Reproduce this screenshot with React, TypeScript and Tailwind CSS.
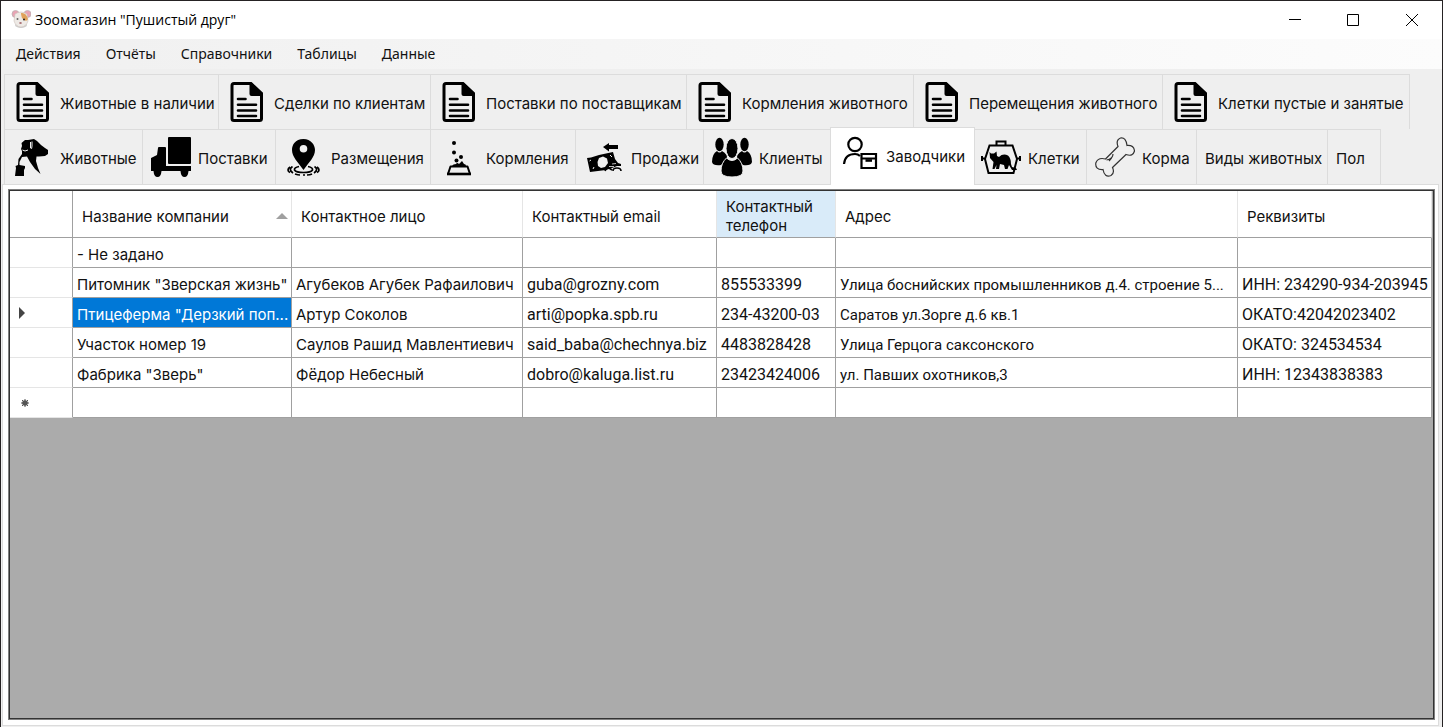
import React from "react";

function FileIcon() {
  return (
    <svg viewBox="0 0 40 40" className="size-10">
      <path d="M7 1.500H24L34.500 11.500V36.500Q34.500 38.500 32.500 38.500H7Q5 38.500 5 36.500V3.500Q5 1.500 7 1.500Z" fill="none" stroke="#000" strokeWidth="3" />
      <path d="M22.500 1H25L36 11.500V14H24.500Q22.500 14 22.500 12Z" />
      <path d="M11 17H18.500M11 22.800H29M11 28.500H29M11 34H29" stroke="#000" strokeWidth="2.600" strokeLinecap="round" />
    </svg>
  );
}

function PetsIcon() {
  return (
    <svg viewBox="0 0 40 40" className="size-10">
      <path d="M2 39L3 31L2.500 29L5 28L5.500 22L9 17L9 14L8 12L9 9L8.500 6L12 3L15 3L21 2L24 4L28 8L32 11L35 13V17L32 19L26 19.500L23.500 19.500L23 24L25 31L27.500 37L22 32L17 25L14 19.500L9 20L6.500 25V28L12 29V31L11 33V39Z" />
      <path d="M17.500 5V11Q19 13 19 9V4.500M9.500 13L12 14L15 13" fill="none" stroke="#efefef" strokeWidth="1" />
    </svg>
  );
}

function TruckIcon() {
  return (
    <svg viewBox="0 0 40 40" className="size-10">
      <rect x="17" y="0" width="23" height="27" rx="1" />
      <path d="M7 11Q7 10 8 10H14Q15 10 15 11V29H40V34H37.500Q37 40 33.500 40Q30 40 29.500 34H10.500Q10 40 6.500 40Q3 40 2.500 34H0V21L6 18Z" />
    </svg>
  );
}

function PinIcon() {
  return (
    <svg viewBox="0 0 40 40" className="size-10">
      <path fillRule="evenodd" d="M19.500 2C11 2 8 8 8 13C8 20 14 25 19.500 33C25 25 31 20 31 13C31 8 27 2 19.500 2ZM19.500 8A3.800 3.800 0 1 1 19.500 15.600A3.800 3.800 0 1 1 19.500 8Z" />
      <path d="M15 29.500Q10 30.500 10.500 33Q12 35.500 19.500 35.500Q27 35.500 28.500 33Q29 30.500 24 29.500M8.500 29.500Q4 32.500 9 36M30.500 29.500Q35 32.500 30 36M6 30Q2 33 6 35.500M33 30Q37 33 33 35.500M11 37Q14 38 16 38M19 38H21M23 38Q26 38 28 37" fill="none" stroke="#000" strokeWidth="1.700" />
    </svg>
  );
}

function FeedIcon() {
  return (
    <svg viewBox="0 0 40 40" className="size-10">
      <circle cx="15" cy="6" r="2" />
      <circle cx="15" cy="15.500" r="2" />
      <circle cx="22" cy="20" r="2" />
      <circle cx="17.500" cy="23.500" r="2" />
      <path d="M13 29Q14 27 17 27Q18 25 20 27L23 24L25 27Q27 27 27 29Z" />
      <path d="M11.500 29.500H28.500L31 37H9Z" fill="none" stroke="#000" strokeWidth="2" strokeLinejoin="round" />
      <path d="M8 37H32" stroke="#000" strokeWidth="2.600" />
    </svg>
  );
}

function SaleIcon() {
  return (
    <svg viewBox="0 0 40 40" className="size-10">
      <path d="M19 10L25 6V8H34V12H25V14.500Z" />
      <path d="M3 21L7 20.500L15 18L29 15L31 22L34 26L37 27V29H33L28 31L22 33L6 35Z" />
      <path d="M13.500 25L15 21L19 19.500L23 21.500L24 26L21 30L17 31L14 29Z" fill="#efefef" />
      <path d="M5.500 24L7 23M9 32L10 30M26 18L28 20" stroke="#efefef" strokeWidth="1" />
      <path d="M21 34Q23 30 25 31L28 33M29 34Q29 31 33 31Q37 31 37 34" fill="none" stroke="#000" strokeWidth="1.600" />
      <path d="M28 27L32 26.500M25 29.500H30" stroke="#efefef" strokeWidth=".8" />
    </svg>
  );
}

function ClientsIcon() {
  return (
    <svg viewBox="0 0 40 40" className="size-10">
      <ellipse cx="7.500" cy="7.500" rx="4.200" ry="6.800" />
      <ellipse cx="32.500" cy="7.500" rx="4.200" ry="6.800" />
      <path d="M0 25Q0 17 5 14Q7.500 17 10 14Q16 17 15 23L9 28Q1 29 0 25ZM40 25Q40 17 35 14Q32.500 17 30 14Q24 17 25 23L31 28Q39 29 40 25Z" />
      <g stroke="#efefef" strokeWidth="1">
        <path d="M14.500 21Q20 26 25.500 21Q31 26 31 34Q31 40 20 40Q9 40 9 34Q9 26 14.500 21Z" />
        <ellipse cx="20" cy="11.500" rx="6" ry="10" />
      </g>
    </svg>
  );
}

function BreederIcon() {
  return (
    <svg viewBox="0 0 40 40" className="size-10">
      <g fill="none" stroke="#000" strokeWidth="2.200">
        <circle cx="16" cy="9.500" r="6.700" />
        <path d="M5 29Q6 19 16 19Q19 19 21 21" />
        <path d="M22.500 19H37V33H22.500ZM22.500 23.500H37" />
        <path d="M26.500 25.500H33" strokeWidth="2.600" />
      </g>
    </svg>
  );
}

function CageIcon() {
  return (
    <svg viewBox="0 0 40 40" className="size-10">
      <path d="M8.500 8.500H31.500L36 22L32.500 36H7.500L4 22ZM15.500 8V4.500H24.500V8M1 19V24M39 19V24M0 21.500H4M36 21.500H40" fill="none" stroke="#000" strokeWidth="2" />
      <path d="M8.500 15L10 16.500L13 16.500L15.500 14.500L16 19L18 20Q22 16 27 18.500Q30 21 30 27L31 30L35 31L36 33H31L28 28L26.500 32H24L23 28L19 27L18 32H15L15.500 28L13.500 32H11.500L12.500 25L9 21Z" />
    </svg>
  );
}

function BoneIcon() {
  return (
    <svg viewBox="0 0 40 40" className="size-10">
      <path d="M10.500 22L23 9.500Q20.500 3 25.500 1Q31 0 32 8.500Q39 8 39.500 14Q38 20 31 17.500L17.500 30.500Q20 36 16 38.500Q9.500 41 8 32.500Q0 33 .800 26Q3 20 10.500 22ZM11.500 23Q18 22 18 17M14 24L16.500 21" fill="none" stroke="#333" strokeWidth="1.200" />
    </svg>
  );
}

function HamsterIcon() {
  return (
    <svg viewBox="0 0 20 20" className="size-5">
      <ellipse cx="10" cy="15" rx="6" ry="3" fill="#cfcfcf" />
      <circle cx="4.500" cy="4" r="3.500" fill="#e9a3b4" stroke="#bdb3b3" strokeWidth=".8" />
      <circle cx="16.500" cy="4" r="3.500" fill="#e9a3b4" stroke="#bdb3b3" strokeWidth=".8" />
      <path d="M4 4Q10 0 16 4L17 11Q15 17 10 17Q5 17 3 11Z" fill="#eeeae6" stroke="#cbbfb8" strokeWidth=".6" />
      <path d="M10 3Q15 2 17 9Q16 12 13 10Q10 8 10 3Z" fill="#e0a25a" />
      <circle cx="6.500" cy="9" r="1" fill="#666" />
      <circle cx="13" cy="9.500" r="1" fill="#222" />
      <ellipse cx="9.500" cy="13" rx="1.300" ry="1" fill="#a97074" />
    </svg>
  );
}

const reports = [
  { label: "Животные в наличии", width: "w-[214px]" },
  { label: "Сделки по клиентам", width: "w-[212px]" },
  { label: "Поставки по поставщикам", width: "w-[256px]" },
  { label: "Кормления животного", width: "w-[227px]" },
  { label: "Перемещения животного", width: "w-[249px]" },
  { label: "Клетки пустые и занятые", width: "w-[247px]" },
];

type Tab = { label: string; width: string; Icon?: () => React.JSX.Element; active?: boolean };

const tabs: Tab[] = [
  { label: "Животные", width: "w-[138px]", Icon: PetsIcon },
  { label: "Поставки", width: "w-[133px]", Icon: TruckIcon },
  { label: "Размещения", width: "w-[155px]", Icon: PinIcon },
  { label: "Кормления", width: "w-[145px]", Icon: FeedIcon },
  { label: "Продажи", width: "w-[128px]", Icon: SaleIcon },
  { label: "Клиенты", width: "w-[128px]", Icon: ClientsIcon },
  { label: "Заводчики", width: "w-[145px]", Icon: BreederIcon, active: true },
  { label: "Клетки", width: "w-[114px]", Icon: CageIcon },
  { label: "Корма", width: "w-[110px]", Icon: BoneIcon },
  { label: "Виды животных", width: "w-[131px]" },
  { label: "Пол", width: "w-[53px]" },
];

const columns = [
  { label: "Название компании", width: "w-[219px]", sorted: true },
  { label: "Контактное лицо", width: "w-[231px]" },
  { label: "Контактный email", width: "w-[194px]" },
  { label: "Контактный телефон", width: "w-[119px]", highlighted: true },
  { label: "Адрес", width: "w-auto" },
  { label: "Реквизиты", width: "w-[194px]" },
];

const cellFonts = [
  "",
  "",
  "font-['Roboto',sans-serif] text-[16px]",
  "font-['Roboto',sans-serif] text-[16px]",
  "font-['Roboto',sans-serif] text-[15px]",
  "font-['Roboto',sans-serif] text-[16px]",
];

const rows = [
  ["- Не задано", "", "", "", "", ""],
  ['Питомник "Зверская жизнь"', "Агубеков Агубек Рафаилович", "guba@grozny.com", "855533399", "Улица боснийских промышленников д.4. строение 5...", "ИНН: 234290-934-203945"],
  ['Птицеферма "Дерзкий поп...', "Артур Соколов", "arti@popka.spb.ru", "234-43200-03", "Саратов ул.Зорге д.6 кв.1", "ОКАТО:42042023402"],
  ["Участок номер 19", "Саулов Рашид Мавлентиевич", "said_baba@chechnya.biz", "4483828428", "Улица Герцога саксонского", "ОКАТО: 324534534"],
  ['Фабрика "Зверь"', "Фёдор Небесный", "dobro@kaluga.list.ru", "23423424006", "ул. Павших охотников,3", "ИНН: 12343838383"],
  ["", "", "", "", "", ""],
];

const selectedRow = 2;

function TabButton({ label, width, Icon, active }: Tab) {
  return (
    <button
      type="button"
      role="tab"
      aria-selected={!!active}
      className={`flex shrink-0 items-center gap-[7px] whitespace-nowrap border-r border-t border-[#dcdcdc] pl-2 ${width} ${
        active ? "z-10 -mx-0.5 -mt-0.5 mb-[-1px] border-l bg-white pb-1" : ""
      }`}
    >
      {Icon && <Icon />}
      <span className="pt-1">{label}</span>
    </button>
  );
}

export default function App() {
  return (
    <div className="flex h-screen flex-col overflow-hidden border-x border-t border-[#252223] bg-[#efefef] font-['Inter',sans-serif] text-[15px] leading-5 text-[#111]">
      <header className="flex h-[38px] shrink-0 items-center bg-white pl-2.5 font-['Open_Sans',sans-serif] text-[14px] text-black">
        <HamsterIcon />
        <h1 className="ml-1 grow">Зоомагазин "Пушистый друг"</h1>
        <button type="button" aria-label="Свернуть" className="flex h-full w-[58px] items-center justify-center">
          <svg viewBox="0 0 12 12" className="size-3"><path d="M0 5.500H12" stroke="#000" /></svg>
        </button>
        <button type="button" aria-label="Развернуть" className="flex h-full w-[58px] items-center justify-center">
          <svg viewBox="0 0 12 12" className="size-3"><path d="M.5 .5H11.500V11.500H.5Z" fill="none" stroke="#000" /></svg>
        </button>
        <button type="button" aria-label="Закрыть" className="flex h-full w-[60px] items-center justify-center">
          <svg viewBox="0 0 12 12" className="size-3"><path d="M0 0L12 12M12 0L0 12" stroke="#000" /></svg>
        </button>
      </header>
      <nav className="flex h-[30px] shrink-0 items-center gap-[25px] bg-linear-to-r from-[#f0f0f0] to-[#fcfcfc] pl-[15px] font-['Noto_Sans',sans-serif] text-[14px]">
        {["Действия", "Отчёты", "Справочники", "Таблицы", "Данные"].map((item) => (
          <button key={item} type="button">{item}</button>
        ))}
      </nav>
      <main className="flex min-h-0 grow flex-col pb-px pl-px pr-[3px] pt-[5px]">
        <div role="tablist" aria-label="Отчёты" className="ml-0.5 flex h-[55px] shrink-0 border-l border-[#dcdcdc]">
          {reports.map((tab) => (
            <TabButton key={tab.label} {...tab} Icon={FileIcon} />
          ))}
        </div>
        <div role="tablist" aria-label="Таблицы" className="z-10 ml-0.5 flex h-[55px] shrink-0 border-l border-[#dcdcdc]">
          {tabs.map((tab) => (
            <TabButton key={tab.label} {...tab} />
          ))}
        </div>
        <section className="flex min-h-0 grow flex-col border border-[#dcdcdc] bg-white pb-[5px] pl-[5px] pr-[3px] pt-1">
          <div className="min-h-0 grow border border-[#808080]">
            <div className="h-full overflow-hidden border border-[#333] bg-[#ababab] pr-px">
              <table className="w-full table-fixed border-separate border-spacing-0 bg-white text-left">
                <thead>
                  <tr className="h-[47px]">
                    <th aria-label="Строка" className="w-[63px] border-b border-r border-[#a0a0a0]" />
                    {columns.map((c) => (
                      <th
                        key={c.label}
                        className={`border-b border-r border-b-[#a0a0a0] border-r-[#e5e5e5] pl-[9px] pt-1 font-normal leading-[19px] ${c.width} ${c.highlighted ? "bg-[#d9ebf9]" : ""}`}
                      >
                        <div className="flex items-center justify-between pr-[3px]">
                          <span>{c.label}</span>
                          {c.sorted && (
                            <svg viewBox="0 0 12 6" className="h-1.5 w-3"><path d="M0 6L6 0L12 6Z" fill="#a0a0a0" /></svg>
                          )}
                        </div>
                      </th>
                    ))}
                  </tr>
                </thead>
                <tbody>
                  {rows.map((row, r) => (
                    <tr key={r} className="h-[30px]">
                      <th aria-label={`Строка ${r + 1}`} className="border-b border-r border-b-[#e5e5e5] border-r-[#a0a0a0] pl-[9px]">
                        {r === selectedRow && (
                          <svg viewBox="0 0 6 12" className="h-3 w-1.5"><path d="M0 0L6 6L0 12Z" fill="#444" /></svg>
                        )}
                        {r === rows.length - 1 && (
                          <svg viewBox="0 0 12 8" className="h-2 w-3"><circle cx="6" cy="4" r="2.800" fill="#555" /><path d="M6 0V8M2 4H10M3 1L9 7M9 1L3 7" stroke="#555" /></svg>
                        )}
                      </th>
                      {row.map((value, c) => (
                        <td
                          key={c}
                          className={`whitespace-nowrap border-b border-r border-[#a0a0a0] pl-1 pt-1 ${cellFonts[c]} ${r === selectedRow && c === 0 ? "bg-[#0078d7] text-white" : ""}`}
                        >
                          {value}
                        </td>
                      ))}
                    </tr>
                  ))}
                </tbody>
              </table>
            </div>
          </div>
        </section>
      </main>
    </div>
  );
}
